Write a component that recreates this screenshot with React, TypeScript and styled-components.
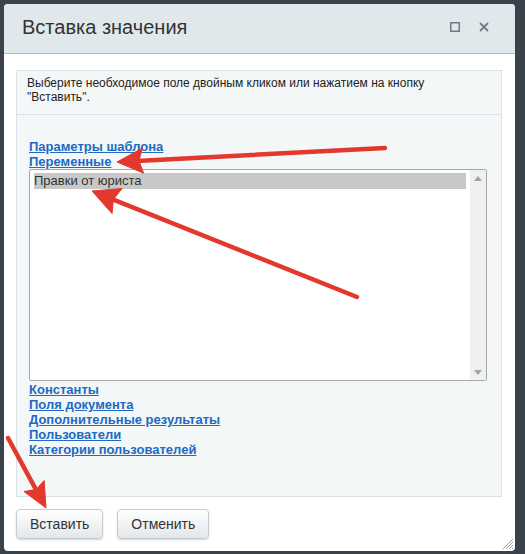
import React from "react";
import styled, { createGlobalStyle } from "styled-components";

const Global = createGlobalStyle`
  html, body { margin: 0; padding: 0; background: #3a434c; }
  body { font-family: "Liberation Sans", Arial, sans-serif; }
  * { box-sizing: border-box; }
`;

const Page = styled.div`
  position: relative;
  width: 525px;
  height: 554px;
  padding: 4px 10px 3px 4px;
  overflow: hidden;
  background: #3a434c;
`;

const Dialog = styled.div`
  position: relative;
  width: 511px;
  height: 547px;
  background: #fff;
  border-radius: 4px;
  display: flex;
  flex-direction: column;
  overflow: hidden;
`;

const Header = styled.div`
  flex: none;
  height: 50px;
  background: #e1e8ec;
  border-bottom: 1px solid #b3bbbf;
  display: flex;
  align-items: center;
  justify-content: space-between;
  padding: 0 26px 3px 18px;
`;

const Title = styled.div`
  font-size: 20px;
  line-height: 24px;
  color: #333;
`;

const Controls = styled.div`
  display: flex;
  align-items: center;
  gap: 19px;
`;

const Body = styled.div`
  flex: 1;
  display: flex;
  flex-direction: column;
  padding: 16px 13px 0 12px;
`;

const Panel = styled.div`
  height: 427px;
  border: 1px solid #d9e2e6;
  background: #f4f7f8;
  display: flex;
  flex-direction: column;
`;

const Intro = styled.div`
  padding: 5px 10px 10px;
  font-size: 12px;
  line-height: 14px;
  color: #222;
  border-bottom: 1px solid #d9e2e6;
`;

const Tree = styled.div`
  padding: 24px 14px 0 12px;
  display: flex;
  flex-direction: column;
  align-items: flex-start;
`;

const Link = styled.a`
  display: block;
  font-size: 13px;
  line-height: 15px;
  font-weight: bold;
  color: #2169c3;
  text-decoration: underline;
  cursor: pointer;
`;

const ListBox = styled.div`
  align-self: stretch;
  height: 212px;
  margin-bottom: 1px;
  border: 1px solid #a6a6a6;
  border-radius: 2px;
  background: #fff;
  display: flex;
`;

const Options = styled.div`
  flex: 1;
  padding: 3px 4px 0 4px;
`;

const Option = styled.div<{ $selected?: boolean }>`
  height: 16px;
  font-size: 13px;
  line-height: 16px;
  color: #333;
  background: ${(p) => (p.$selected ? "#c8c8c8" : "transparent")};
`;

const Scrollbar = styled.div`
  width: 16px;
  background: #f0f0f0;
  display: flex;
  flex-direction: column;
  justify-content: space-between;
  align-items: center;
  padding: 6px 0 5px;
`;

const ButtonRow = styled.div`
  display: flex;
  gap: 14px;
  margin-top: 12px;
`;

const Button = styled.button`
  height: 30px;
  padding: 0 13px;
  border: 1px solid #c6cdd1;
  border-radius: 4px;
  background: linear-gradient(#ffffff, #e3e7e9);
  box-shadow: 0 1px 2px rgba(0, 0, 0, 0.18);
  font-family: "Liberation Sans", Arial, sans-serif;
  font-size: 14px;
  color: #333;
  cursor: pointer;
`;

const Grip = styled.svg`
  position: absolute;
  right: 1px;
  bottom: 1px;
`;

const Overlay = styled.svg`
  position: absolute;
  left: 0;
  top: 0;
  pointer-events: none;
`;

type Pt = [number, number];

function arrow(tail: Pt, tip: Pt, len: number, half: number) {
  const dx = tip[0] - tail[0];
  const dy = tip[1] - tail[1];
  const d = Math.hypot(dx, dy);
  const ux = dx / d;
  const uy = dy / d;
  const bx = tip[0] - ux * len;
  const by = tip[1] - uy * len;
  const px = -uy;
  const py = ux;
  const pts = [
    [tip[0], tip[1]],
    [bx + px * half, by + py * half],
    [bx + ux * 4, by + uy * 4],
    [bx - px * half, by - py * half],
  ]
    .map((p) => p.join(","))
    .join(" ");
  return { line: { x1: tail[0], y1: tail[1], x2: bx + ux * 6, y2: by + uy * 6 }, pts };
}

const arrows = [
  arrow([385, 148], [117, 162], 26, 12.5),
  arrow([357, 297], [92, 191], 27, 13.5),
  arrow([8, 438], [46, 508], 25, 11.5),
];

export default function App() {
  return (
    <>
      <Global />
      <Page>
        <Dialog>
          <Header>
            <Title>Вставка значения</Title>
            <Controls>
              <svg width="10" height="10" viewBox="0 0 10 10">
                <rect x="0.75" y="0.75" width="8.5" height="8.5" fill="none" stroke="#6f7b83" strokeWidth="1.5" />
              </svg>
              <svg width="10" height="10" viewBox="0 0 10 10">
                <path d="M1 1 L9 9 M9 1 L1 9" stroke="#6f7b83" strokeWidth="1.8" />
              </svg>
            </Controls>
          </Header>
          <Body>
            <Panel>
              <Intro>
                Выберите необходимое поле двойным кликом или нажатием на кнопку
                <br />
                "Вставить".
              </Intro>
              <Tree>
                <Link>Параметры шаблона</Link>
                <Link>Переменные</Link>
                <ListBox role="listbox">
                  <Options>
                    <Option $selected>Правки от юриста</Option>
                  </Options>
                  <Scrollbar>
                    <svg width="8" height="5" viewBox="0 0 8 5">
                      <path d="M0 5 L4 0 L8 5 Z" fill="#a3a3a3" />
                    </svg>
                    <svg width="8" height="5" viewBox="0 0 8 5">
                      <path d="M0 0 L4 5 L8 0 Z" fill="#a3a3a3" />
                    </svg>
                  </Scrollbar>
                </ListBox>
                <Link>Константы</Link>
                <Link>Поля документа</Link>
                <Link>Дополнительные результаты</Link>
                <Link>Пользователи</Link>
                <Link>Категории пользователей</Link>
              </Tree>
            </Panel>
            <ButtonRow>
              <Button>Вставить</Button>
              <Button>Отменить</Button>
            </ButtonRow>
          </Body>
          <Grip width="13" height="13" viewBox="0 0 13 13">
            <path d="M12 2 L2 12 M12 5 L5 12 M12 8 L8 12 M12 11 L11 12" stroke="#9aa2a6" strokeWidth="1" />
          </Grip>
        </Dialog>
        <Overlay width="525" height="554" viewBox="0 0 525 554">
          {arrows.map((a, i) => (
            <g key={i}>
              <line {...a.line} stroke="#e2382d" strokeWidth="4.5" strokeLinecap="round" />
              <polygon points={a.pts} fill="#e2382d" stroke="#e2382d" strokeWidth="1" strokeLinejoin="round" />
            </g>
          ))}
        </Overlay>
      </Page>
    </>
  );
}
